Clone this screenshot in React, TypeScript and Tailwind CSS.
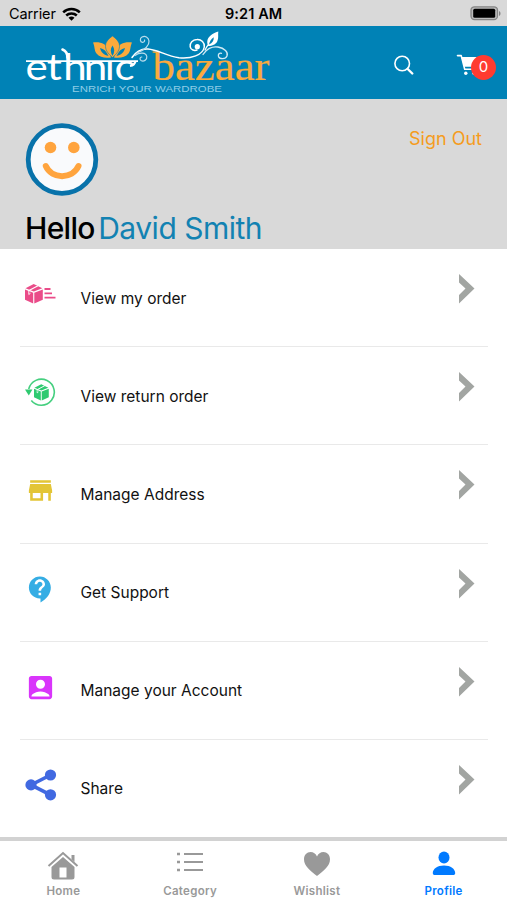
import type { ReactNode } from "react";
import { MdStore, MdContactSupport, MdAccountBox } from "react-icons/md";

interface MenuItem {
  label: string;
  icon: ReactNode;
}

function Logo() {
  return (
    <svg width="280" height="73" viewBox="0 26 280 73" className="shrink-0">
      {/* wordmark */}
      <text
        x="21.800 40 54 71.500 89.500 97.800"
        y="80"
        transform="scale(1.170 1)"
        fill="#fff"
        fontFamily="Lato, sans-serif"
        fontSize="36"
      >
        ethnic
      </text>
      <path d="M103 50h13v9.500h-13z" fill="#0082b6" />
      <path d="M26 61.200H138" stroke="#fff" strokeWidth="1.800" />
      <path d="M62.500 49.500c3.500 1.500 5 4 5 8" stroke="#fff" strokeWidth="2.600" fill="none" strokeLinecap="round" />
      <path d="M130 66c3-.5 5-2 5.500-5" stroke="#fff" strokeWidth="2.200" fill="none" />
      <text
        x="152.500"
        y="80"
        textLength="117"
        lengthAdjust="spacingAndGlyphs"
        fill="#fbaa3c"
        stroke="#fbaa3c"
        strokeWidth=".2"
        fontFamily="'Liberation Serif', serif"
        fontSize="39"
      >
        bazaar
      </text>
      <text x="72" y="92" textLength="150" lengthAdjust="spacingAndGlyphs" fill="#8fcde6" fontFamily="'Liberation Sans', sans-serif" fontSize="9">
        ENRICH YOUR WARDROBE
      </text>

      {/* lotus */}
      <g fill="#fbaa3c">
        <path d="M93 42.500c8-.8 13 1.500 15.500 6.500 1.200 2.800 1.500 5.500 2.500 8.500-6 .6-11.500 0-14.500-4-2.500-3.400-1.500-7-3.500-11z" />
        <path d="M132 42.500c-8-.8-13 1.500-15.500 6.500-1.200 2.800-1.500 5.500-2.500 8.500 6 .6 11.500 0 14.500-4 2.500-3.400 1.500-7 3.500-11z" />
        <path d="M112.500 36c4.500 3.200 7.200 6.500 7 10.500-.2 4.500-3.500 8-7 11-3.500-3-6.800-6.500-7-11-.2-4 2.500-7.300 7-10.500z" stroke="#0082b6" strokeWidth=".6" />
      </g>
      <g fill="#0082b6">
        <path d="M112.500 45.500c2.300 3 2.300 7 0 10.500-2.300-3.500-2.300-7.500 0-10.500z" />
        <path d="M100 48c4 .8 6.500 3.500 8.500 8-4.500-1-7.500-3.500-8.500-8z" />
        <path d="M125 48c-4 .8-6.500 3.500-8.500 8 4.500-1 7.500-3.500 8.500-8z" />
      </g>

      {/* vine */}
      <g fill="none" stroke="#fff" strokeLinecap="round">
        <path d="M132 57.500c4-6 9-9 16-8.500 10 .7 18 7 31 8.700 12 1.300 24-2.700 25.300-10.700.6-4.500-3-7.800-7.300-7.500-4.300.2-7.500 3.500-6.800 7.300.7 3.300 4.300 4.200 6.800 3.200" strokeWidth="1.500" />
        <circle cx="197.300" cy="46.700" r="2.600" fill="#fff" stroke="none" />
        <path d="M137 53c7-3 12.500-7 12-12-.5-4-4-5.500-7-4-2.500 1.500-2 5 .5 5.300 1.500.2 2.500-1 2-2.200" stroke="#b9dcec" strokeWidth="1.200" />
        <path d="M135 55.500c5-3.500 11-3 11.800 1 .5 3.500-3.300 5.500-5.800 4-1.700-1.200-1-3.700.8-3.500" stroke="#b9dcec" strokeWidth="1.200" />
        <path d="M203 54.500c3-5.500 9-8.500 15-7.500 6.500 1 10.500 5.500 9 9-1.500 3.500-7.300 3.500-8.500.5-.7-2.200 1-4 3-3.200" stroke="#d4ebf5" strokeWidth="1.300" />
        <path d="M205 50c1-2.500 2-4 4-6" strokeWidth="1.200" />
      </g>
      <path d="M218.300 31.500c-6.300 1.800-10.500 5.500-11 9.500-.2 2 .2 3.500 1 5 4-.3 7.500-1.500 9-4.800 1.600-3.200.5-6.400 1-9.700z" fill="#fff" />
      <path d="M209 44.500c.5-3 2-5.500 4.700-7.300.3 3.200-1.200 6-4.700 7.300z" fill="#0082b6" />
    </svg>
  );
}

// box used by both order icons
function Box({ color }: { color: string }) {
  return (
    <>
      <path d="M0 5.500 8.200 8.800V19.500L0 15.700z" fill={color} />
      <path d="M17.800 5.500 9.300 8.800v10.700l8.500-3.800z" fill={color} />
      <path d="M.5 4.300 8.700 0l8.600 4.300-8.500 3.200z" fill={color} />
      <path d="M4 6.500 13 1.800" stroke="#fff" strokeWidth="1.200" />
      <path d="M3.800 6v4.500l1.700-1.300" stroke="#fff" strokeWidth=".9" fill="none" />
    </>
  );
}

function OrderIcon() {
  return (
    <svg width="32" height="21" viewBox="0 0 32 21">
      <Box color="#ea4c89" />
      <path d="M19.500 5h6M19.500 9.300h7.500M19.500 13.700h11" stroke="#ea4c89" strokeWidth="1.800" />
    </svg>
  );
}

function ReturnIcon() {
  return (
    <svg width="31" height="29" viewBox="0 0 31 29">
      <path d="M3.700 11A13 13 0 1 1 6.300 22.500" fill="none" stroke="#45cf7f" strokeWidth="1.600" />
      <path d="M0 11.500h7.400L3.800 17.500z" fill="#2fca70" />
      <g transform="translate(9 6.200) scale(.83)">
        <Box color="#2fca70" />
      </g>
    </svg>
  );
}

function ShareIcon() {
  return (
    <svg width="32" height="32" viewBox="0 0 32 32" fill="#4169e1">
      <path d="M25.500 6 6 15.900 25.500 25.800" fill="none" stroke="#4169e1" strokeWidth="3.600" />
      <circle cx="6" cy="15.900" r="5.600" />
      <circle cx="25.500" cy="6" r="5.600" />
      <circle cx="25.500" cy="25.800" r="5.600" />
    </svg>
  );
}

const menu: MenuItem[] = [
  { label: "View my order", icon: <OrderIcon /> },
  { label: "View return order", icon: <ReturnIcon /> },
  { label: "Manage Address", icon: <MdStore size={31} color="#e3c536" /> },
  { label: "Get Support", icon: <MdContactSupport size={31} color="#35ade4" /> },
  { label: "Manage your Account", icon: <MdAccountBox size={31} color="#d935fb" /> },
  { label: "Share", icon: <ShareIcon /> },
];

function StatusBar() {
  return (
    <div className="relative flex h-[25.500px] shrink-0 items-center justify-between bg-[#d9d9d9] pt-[2px] pr-[6px] pl-[9px]">
      <div className="flex items-center gap-[6px]">
        <span className="text-[14.500px] tracking-[-0.100px]">Carrier</span>
        <svg width="19" height="14" viewBox="0 0 19 14" fill="none" stroke="#000" strokeWidth="2.500">
          <path d="M1.200 5.300a12 12 0 0 1 16.600 0" />
          <path d="M4.200 8.500a7.700 7.700 0 0 1 10.600 0" />
          <path d="M9.500 13.800 6.500 10.800a4.400 4.400 0 0 1 6 0z" fill="#000" stroke="none" />
        </svg>
      </div>
      <span className="absolute left-[225px] text-[14.500px] font-semibold tracking-[0.100px]">9:21 AM</span>
      <svg width="31" height="15" viewBox="0 0 31 15">
        <rect x="1" y=".8" width="26.500" height="12.800" rx="3.500" fill="#bbb" stroke="#858585" strokeWidth="1.300" />
        <rect x="3.200" y="2.700" width="22" height="9" rx="1.500" fill="#000" />
        <path d="M29 5v5c2-.7 2-4.300 0-5z" fill="#858585" />
      </svg>
    </div>
  );
}

function Header() {
  return (
    <header className="flex h-[73px] shrink-0 justify-between bg-[#0082b6]">
      <Logo />
      <div className="flex items-start pt-[28px] pr-[11px]">
        <svg width="22" height="22" viewBox="0 0 22 22" fill="none" stroke="#fff" className="mr-[41.500px]">
          <circle cx="9.200" cy="9.500" r="7.300" strokeWidth="1.600" />
          <path d="m14.700 15 4.600 4.500" strokeWidth="2.400" strokeLinecap="round" />
        </svg>
        <div className="relative h-6 w-10">
          <svg width="22" height="22" viewBox="0 0 22 22" fill="#fff">
            <path d="M1.500 1.600h3.700l3.500 13.600h12" fill="none" stroke="#fff" strokeWidth="1.600" strokeLinejoin="round" strokeLinecap="round" />
            <path d="M5.500 3h17l-2.500 9.800H8z" />
            <circle cx="9.800" cy="19.200" r="1.700" />
            <circle cx="18" cy="19.200" r="1.700" />
          </svg>
          <span className="absolute top-[1px] left-[15px] flex h-[25px] w-[25px] items-center justify-center rounded-full bg-[#ff3b30] text-[15px] text-white">
            0
          </span>
        </div>
      </div>
    </header>
  );
}

function ProfileBanner() {
  return (
    <section className="flex h-[150.500px] shrink-0 items-start justify-between bg-[#d9d9d9] px-[25px] pt-[24px]">
      <div>
        <svg width="74" height="74" viewBox="0 0 74 74">
          <circle cx="37" cy="36.500" r="33.800" fill="#f9fafc" stroke="#0872aa" strokeWidth="4.800" />
          <circle cx="25.500" cy="24.500" r="5.800" fill="#ffa43e" />
          <circle cx="48.800" cy="24.500" r="5.800" fill="#ffa43e" />
          <path d="M20.800 43c6 13.500 26.500 13.500 32.700 0" fill="none" stroke="#ffa43e" strokeWidth="6" strokeLinecap="round" />
        </svg>
        <h1 className="mt-[11px] flex gap-[3.500px] text-[30px] leading-[40px] whitespace-nowrap">
          <span className="font-medium tracking-[-0.700px]">Hello</span>
          <span className="tracking-[-0.500px] text-[#1282b2]">David Smith</span>
        </h1>
      </div>
      <button className="mt-[4px] text-[18px] leading-6 text-[#f59c20]">Sign Out</button>
    </section>
  );
}

function MenuRow({ item }: { item: MenuItem }) {
  return (
    <li className="flex h-[98.200px] border-b-[1.500px] border-[#e9e9e9] last:border-transparent">
      <div className="flex h-[91px] w-[41px] items-center justify-center">{item.icon}</div>
      <span className="ml-[19.500px] grow pt-[37.500px] text-[15.500px] leading-6 text-[#111]">{item.label}</span>
      <svg width="18" height="32" viewBox="0 0 18 32" className="mt-[24px] mr-[12px]">
        <path d="M1 1 16.500 15.500 1 30.500V22L7.500 15.500 1 9.500z" fill="#a2a5a2" />
      </svg>
    </li>
  );
}

function TabBar() {
  return (
    <nav className="grid h-[63px] shrink-0 grid-cols-4 border-t-[4px] border-[#d2d2d2] bg-white text-[11.500px] font-semibold tracking-[0.300px] text-[#999]">
      <div className="flex flex-col items-center pt-[9px]">
        <svg width="32" height="31" viewBox="0 0 32 31" fill="#999">
          <path d="M1.500 16 16 3l14.500 13" fill="none" stroke="#999" strokeWidth="2" />
          <path d="M24.500 5h3v7l-3-2.700z" />
          <path d="M16 7 27.500 17v10a2.500 2.500 0 0 1-2.500 2.500H7A2.500 2.500 0 0 1 4.500 27V17zM12.500 17.500v10h7v-10z" fillRule="evenodd" />
        </svg>
        <span className="leading-5">Home</span>
      </div>
      <div className="flex flex-col items-center pt-[9px]">
        <svg width="28" height="31" viewBox="0 0 28 31" fill="none" stroke="#999">
          <path d="M1 4h3M1 12h3M1 20h3" strokeWidth="2.600" />
          <path d="M8 4h19M8 12h19M8 20h19" strokeWidth="1.800" />
        </svg>
        <span className="leading-5">Category</span>
      </div>
      <div className="flex flex-col items-center pt-[9px]">
        <svg width="28" height="31" viewBox="0 0 28 31" fill="#999">
          <path d="M14 26C7 20.500 1 16 1 9.300 1 5 4 2 7.500 2c3 0 5.200 1.700 6.500 4.500C15.300 3.700 17.500 2 20.500 2 24 2 27 5 27 9.300 27 16 21 20.500 14 26z" />
        </svg>
        <span className="leading-5">Wishlist</span>
      </div>
      <div className="flex flex-col items-center pt-[9px] text-[#007aff]">
        <svg width="24" height="31" viewBox="0 0 24 31" fill="#007aff">
          <ellipse cx="12" cy="7.500" rx="5.500" ry="6" />
          <path d="M.8 23c0-4 4.500-7.500 11.200-7.500s11.200 3.500 11.200 7.500c0 1.500-.8 2-2 2H2.800c-1.200 0-2-.5-2-2z" />
        </svg>
        <span className="leading-5">Profile</span>
      </div>
    </nav>
  );
}

export default function App() {
  return (
    <div className="flex h-[900px] w-[507px] flex-col overflow-hidden bg-white font-['Inter',sans-serif] text-black">
      <StatusBar />
      <Header />
      <ProfileBanner />
      <ul className="h-[588px] shrink-0 overflow-hidden pr-[19px] pl-[20px]">
        {menu.map((item) => (
          <MenuRow key={item.label} item={item} />
        ))}
      </ul>
      <TabBar />
    </div>
  );
}
